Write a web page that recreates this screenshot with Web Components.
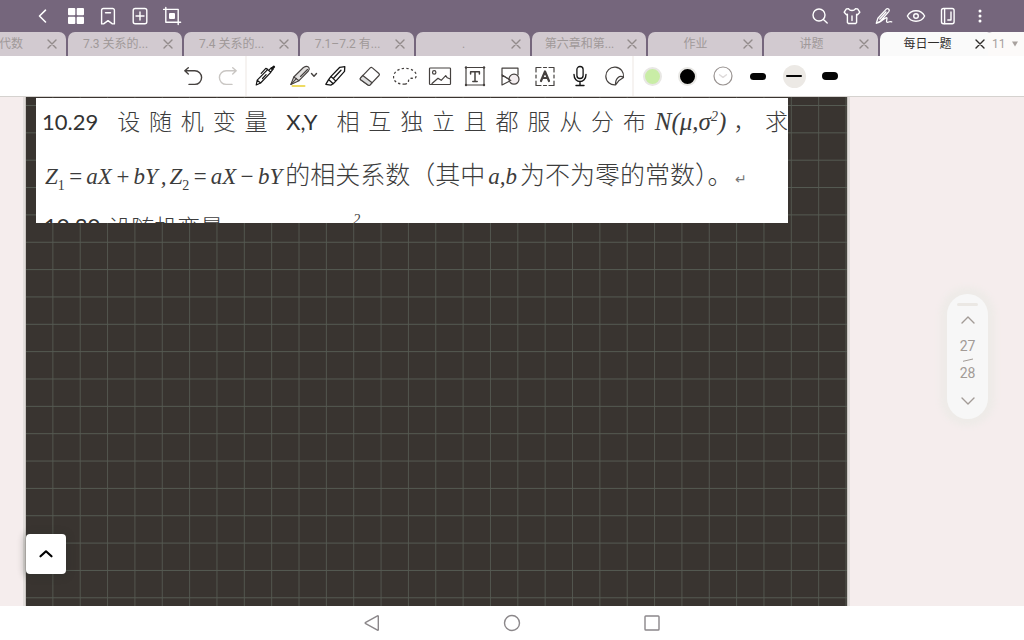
<!DOCTYPE html>
<html lang="zh-CN">
<head>
<meta charset="utf-8">
<meta name="viewport" content="width=device-width, initial-scale=1">
<title>每日一题</title>
<style>
html, body { margin: 0; height: 100%; }
body { font-family: Roboto, "Noto Sans CJK SC", sans-serif; }
</style>
</head>
<body>
<note-app></note-app>
<script>
const ICONS = {
  back: '<path d="M13.5 6.2 7.5 12l6 6" stroke-width="1.6"/>',
  grid: '<g fill="currentColor" stroke="none"><rect x="4" y="4" width="7.3" height="7.3" rx="1"/><rect x="12.7" y="4" width="7.3" height="7.3" rx="1"/><rect x="4" y="12.7" width="7.3" height="7.3" rx="1"/><rect x="12.7" y="12.7" width="7.3" height="7.3" rx="1"/></g>',
  bookmark: '<path d="M5.6 6.3a1.8 1.8 0 0 1 1.8-1.8h9.2a1.8 1.8 0 0 1 1.8 1.8v13.6h-2L12 16.6l-4.4 3.3h-2zM9.5 8.7h5"/>',
  add: '<rect x="5.2" y="4.5" width="13.6" height="15.2" rx="2"/><path d="M12 8v8M8 12h8"/>',
  crop: '<path d="M3.6 5.4h14.6v15.2M5.8 3.4v14.8h14.8"/><rect x="9" y="9" width="6" height="6" rx="1" fill="currentColor" stroke="none"/>',
  search: '<circle cx="11" cy="11" r="6"/><path d="m15.4 15.4 3.8 3.6"/>',
  shirt: '<path d="M8.6 4.6c.8 2.6 6 2.6 6.8 0l2.2.3 2.2 3.3-2.3 2.6-.9-.5v8.2l-1 1H8.4l-1-1v-8.2l-.9.5-2.3-2.6 2.2-3.3zM12 12v4.5"/>',
  sign: '<path d="m4.3 19.3 1.6-5 8.4-9.200q1.300-1 2.500.1 1 1.200 0 2.400L8.500 17zM7.800 15l6.200-7M4.300 19.300c4.200 0 7.200-5 10.200-5.600 1.600 0-1.300 4.300.9 4.600 1.500.2 1.500-1.500 4.300-.4" stroke-width="1.300"/>',
  eye: '<path d="M3.400 12c3.600-7 13.600-7 17.200 0-3.600 7-13.600 7-17.200 0z"/><circle cx="12" cy="12" r="2.300"/>',
  notebook: '<rect x="5.500" y="4.500" width="12.600" height="15.300" rx="2"/><path d="M8.600 5v14.500M15 8v8h-3.200"/>',
  more: '<g fill="currentColor" stroke="none"><circle cx="12" cy="7" r="1.500"/><circle cx="12" cy="12" r="1.500"/><circle cx="12" cy="17" r="1.500"/></g>',
  undo: '<path d="M7.300 3.700 3.800 6.800l3.500 3.300M4 6.800h9.800a6.800 6.800 0 0 1 0 13.600H8"/>',
  redo: '<path d="m16.700 3.700 3.500 3.100-3.500 3.300M20 6.800h-9.800a6.800 6.800 0 0 0 0 13.600H16"/>',
  pencil: '<path d="m3.200 21 1-4.800L14.600 5.600l3.200 2.700L7.600 19zM4.200 16.200 7.600 19M8.200 9.400l4.600-5 2 1M15.800 6.400l2.600-2.800 1.800 1.600-2.500 2.800M9.500 14.500l3.600-3.800" stroke-width="1.200"/><path d="m19 4.600 1.800-1.700" stroke-width="2.600"/>',
  pen: '<path d="M4.500 22h12" stroke="#eedb62" stroke-width="2"/><g stroke-width="1.100"><path d="m2.800 20.500 3-7.500 9.600-9.500q4-2.400 5.600.3.800 1.500-.6 3.200l-9.400 9.700z" fill="#e2e0df"/><path d="m3 20.300 5.500-6M5.800 13l5.200 3.700M12.500 12.500l7-7"/></g>',
  highlighter: '<path d="m8 12.400 8.800-9.100 5-.6-.3 4.700-8.700 9.700zM8 12.400l-2.400 3.200 4.600 4.100 2.600-2.600M5.600 15.600l-2.800 4.700 5 .8 2.400-1.400M10.500 14.200l7.500-8" stroke-width="1.300"/>',
  eraser: '<path d="m2.600 13.800 9.600-9.900q1.100-1 2.200 0l6.500 5.600q1 1 .1 2l-8.900 9.300q-1 1-2.100.1l-7.300-5.200q-1-.9-.1-1.900z" stroke-width="1.200"/><path d="m2.600 13.800 2.200-2.300 9.300 7.200-2 2.100q-1 1-2.100.1l-7.300-5.200q-1-.9-.1-1.900z" fill="#ddd" stroke-width="1.200"/>',
  lasso: '<path d="M12 20.200C4 20.500-.5 16.500.7 11.500 2 5.500 10 3.300 16 4.800c6.500 1.600 8.600 5.800 6.300 9.200-2.200.8-5.800-.6-6.600 1.500-.4 2 .3 3.800-3.700 4.700z" stroke-width="1.300" stroke-dasharray="2.300 2.300" stroke-linecap="butt"/>',
  image: '<rect x="1.500" y="4" width="21" height="16.500" rx=".8" stroke-width="1.200"/><circle cx="6.200" cy="8.400" r="1.700" stroke-width="1.200"/><path d="m4 19.500 6-5.200 3.200 2 4.500-4.600 1.600 2.100 3 1.200" stroke-width="1.200"/>',
  text: '<rect x="3" y="3.500" width="18" height="17.500" stroke-width="1.200"/><path d="M7.600 10V7.700h8.800V10M12 7.700v9.600m-2.200.2h4.400" stroke-width="1.500"/><g fill="currentColor" stroke="none"><circle cx="3" cy="3.500" r="1.200"/><circle cx="21" cy="3.500" r="1.200"/><circle cx="3" cy="21" r="1.200"/><circle cx="21" cy="21" r="1.200"/></g>',
  shapes: '<g stroke-width="1.200"><path d="M4 11V4.200h16v6.600M4 11v10l8.800-4.600z"/><circle cx="16" cy="15.200" r="5" fill="#f3edef"/><path d="m4 11 8.800 5.400"/></g>',
  ocr: '<path d="M3 8V3.500h5M16 3.500h5V8M21 17v4.500h-5M8 21.500H3V17M10.500 3.500h3M10.500 21.500h3M3 11v3M21 11v3" stroke-width="1.200"/><path d="m8 17 4-9.600L16 17M9.500 14h5" stroke-width="2.200"/>',
  mic: '<rect x="8.900" y="2.500" width="6.200" height="12" rx="3.100" stroke-width="1.300"/><path d="M6 10.500c0 9.300 12 9.300 12 0M12 17.500v4M8 21.500h8" stroke-width="1.400"/>',
  sticker: '<path d="M12.600 20.900a8.900 8.900 0 1 1 7.900-7.500q-3-2-5.600.3-2.700 2.500-2.300 7.200zM12.600 20.900l3.100-4.100 4.800-3.400" stroke-width="1.200"/>',
  check: '<circle cx="12" cy="12" r="9" stroke="#999391" stroke-width="1.200"/><path d="m8.500 10.800 3.500 2.600 3.500-2.600" stroke="#dedada"/>',
  close: '<path d="m8 8 8 8m0-8-8 8" stroke-width="1.400"/>',
  up: '<path d="m6 15 6-6 6 6"/>',
  down: '<path d="m6 9 6 6 6-6"/>',
  upBold: '<path d="m6.500 14.300 5.500-5 5.500 5" stroke-width="2.200"/>',
  small: '<path d="m9.500 10.500 2.500 2.700 2.500-2.700"/>',
  navBack: '<path d="M18.300 5.300v13.400q0 .9-.8.500L5.700 12.700q-1-.7 0-1.400l11.800-6.500q.8-.4.8.5z"/>',
  navHome: '<circle cx="12" cy="12" r="7.500"/>',
  navRecent: '<rect x="5" y="5" width="14" height="14" rx=".8"/>'
};

class Base extends HTMLElement {
  connectedCallback() {
    if (this.shadowRoot) return;
    const t = document.createElement('template');
    t.innerHTML = '<style>' + this.css() + '</style>' + this.html();
    this.attachShadow({ mode: 'open' }).append(t.content.cloneNode(true));
  }
}

customElements.define('ui-icon', class extends Base {
  css() { return ':host{display:block;width:24px;height:24px} svg{display:block;width:100%;height:100%}'; }
  html() {
    return '<svg viewBox="0 0 24 24" fill="none" stroke="currentColor" stroke-width="1.4" stroke-linecap="round" stroke-linejoin="round" aria-hidden="true">' + ICONS[this.getAttribute('name')] + '</svg>';
  }
});

customElements.define('icon-button', class extends Base {
  css() {
    return `:host{display:block;width:var(--button-width,32px);height:32px}
    button{all:unset;box-sizing:border-box;width:100%;height:100%;display:flex;align-items:center;justify-content:center;cursor:pointer;color:inherit}`;
  }
  html() {
    return '<button type="button" aria-label="' + this.getAttribute('label') + '"><ui-icon name="' + this.getAttribute('name') + '"></ui-icon></button>';
  }
});

customElements.define('pen-button', class extends Base {
  css() {
    return `:host{display:block;width:35px;height:32px}
    button{all:unset;width:100%;height:100%;display:flex;align-items:center;justify-content:center;position:relative}
    .more{position:absolute;left:20px;top:3px}`;
  }
  html() { return '<button type="button" aria-label="钢笔"><ui-icon name="pen"></ui-icon><ui-icon class="more" name="small"></ui-icon></button>'; }
});

customElements.define('app-header', class extends Base {
  css() {
    return `:host{display:flex;justify-content:space-between;height:32px;padding:0 28px;background:#75667c;color:#fff}
    div{display:flex}`;
  }
  html() {
    const make = list => list.map(([n, l]) => `<icon-button name="${n}" label="${l}"></icon-button>`).join('');
    return '<div>' + make([['back', '返回'], ['grid', '目录'], ['bookmark', '书签'], ['add', '添加页面'], ['crop', '裁剪']]) + '</div><div>' +
      make([['search', '搜索'], ['shirt', '主题'], ['sign', '手写'], ['eye', '阅读'], ['notebook', '笔记本'], ['more', '更多']]) + '</div>';
  }
});

customElements.define('note-tab', class extends Base {
  css() {
    return `:host{display:flex;flex:none;box-sizing:border-box;width:114px;height:24px;padding-right:7px;align-items:center;border-radius:7px 7px 0 0;background:#d2cad0;color:#a09999}
    :host([active]){background:#fafafa;color:#2f2c2a}
    button{all:unset;cursor:pointer}
    .title{flex:1;padding-left:2px;font-size:12px;line-height:24px;text-align:center;white-space:nowrap}
    :host([cut]) .title{text-align:right;padding-right:22px}
    .close{width:14px;height:24px;display:flex;align-items:center;justify-content:center;color:#928b8b}
    :host([active]) .close{color:#2f2c2a}
    ui-icon{flex:none}`;
  }
  html() { return '<button class="title" type="button"><slot></slot></button><button class="close" type="button" aria-label="关闭"><ui-icon name="close"></ui-icon></button>'; }
});

customElements.define('tab-strip', class extends Base {
  css() {
    return `:host{display:block;position:relative;background:#75667c;height:24px;overflow:hidden}
    nav{display:flex;gap:2px;justify-content:flex-end;padding-right:30px}
    .count{all:unset;position:absolute;right:0;top:0;box-sizing:border-box;width:36px;height:24px;padding-left:4px;display:flex;align-items:center;gap:5px;background:#fcfaf9;border-radius:4px 0 0 0;color:#a8a19e;font-size:12px}
    .count svg{width:8px;height:6px}`;
  }
  html() {
    return `<nav><note-tab cut>代数</note-tab><note-tab>7.3 关系的...</note-tab><note-tab>7.4 关系的...</note-tab><note-tab>7.1–7.2 有...</note-tab><note-tab>.</note-tab><note-tab>第六章和第...</note-tab><note-tab>作业</note-tab><note-tab>讲题</note-tab><note-tab active>每日一题</note-tab></nav>
    <button class="count" type="button">11<svg viewBox="0 0 8 6" aria-hidden="true"><path d="M1 .5h6L4 5.500z" fill="#a8a19e"/></svg></button>`;
  }
});

customElements.define('tool-swatch', class extends Base {
  css() {
    return `:host{display:block;width:35px;height:32px}
    button{all:unset;width:100%;height:100%;display:flex;align-items:center;justify-content:center}
    i{display:block;width:15px;height:15px;border-radius:50%;border:2px solid #e8e7e4;background:var(--ink)}`;
  }
  html() { return '<button type="button" aria-label="颜色"><i></i></button>'; }
});

customElements.define('stroke-size', class extends Base {
  css() {
    return `:host{display:block;width:36px;height:32px}
    button{all:unset;width:100%;height:100%;display:flex;align-items:center;justify-content:center}
    span{width:23px;height:23px;display:flex;align-items:center;justify-content:center;border-radius:50%}
    :host([selected]) span{background:#ece9e5}
    i{flex:none;width:16px;height:var(--weight);border-radius:4px;background:#050505}`;
  }
  html() { return '<button type="button" aria-label="粗细"><span><i></i></span></button>'; }
});

customElements.define('tool-bar', class extends Base {
  css() {
    return `:host{display:flex;justify-content:center;align-items:center;height:40px;padding-right:1px;background:#fff;border-bottom:1px solid #d5d2cf;color:#45413f;--button-width:35px}
    div{display:flex}
    hr{width:2px;height:40px;margin:0;border:0;background:#f6f3f1}
    hr + div + hr{margin-right:1px}
    .off{color:#c9c6c3}
    .dark{color:#151515}
    .green{--ink:#c9eda6}
    .black{--ink:#000}
    .thin{--weight:2px}
    .medium{--weight:7px}
    .thick{--weight:8px}`;
  }
  html() {
    const b = (n, l, c = '') => `<icon-button class="${c}" name="${n}" label="${l}"></icon-button>`;
    return `<div>${b('undo', '撤销')}${b('redo', '重做', 'off')}</div><hr>
    <div>${b('pencil', '铅笔', 'dark')}<pen-button></pen-button>${b('highlighter', '荧光笔', 'dark')}${b('eraser', '橡皮')}${b('lasso', '套索')}${b('image', '图片')}${b('text', '文本')}${b('shapes', '形状')}${b('ocr', '识别')}${b('mic', '录音', 'dark')}${b('sticker', '贴纸')}</div><hr>
    <div><tool-swatch class="green"></tool-swatch><tool-swatch class="black"></tool-swatch>${b('check', '选择颜色')}<stroke-size class="medium"></stroke-size><stroke-size class="thin" selected></stroke-size><stroke-size class="thick"></stroke-size></div>`;
  }
});

customElements.define('problem-card', class extends Base {
  css() {
    return `:host{display:block;box-sizing:border-box;height:125px;overflow:hidden;background:#fff;color:#3c3c3c;font:23px "Noto Sans CJK SC",sans-serif;font-weight:300}
    p{margin:0;white-space:nowrap}
    .first{height:44px;line-height:44px;padding-left:6px;text-align:justify;text-align-last:justify}
    .latin{font-family:Lato,"Noto Sans CJK SC",sans-serif;font-size:22px;font-weight:400;color:#333}
    .number{margin-right:12px}
    .pair{margin:0 12px 0 10px}
    .math{font:italic 23px "Liberation Serif",serif}
    .first .math{font-size:25px}
    sup,sub{font-size:14px;line-height:0;font-style:italic}
    sub{font-style:normal}
    .second{display:flex;align-items:baseline;gap:3px;padding-left:9px;height:62px;line-height:62px}
    .second .text{font-size:25px}
    .return{font-size:14px;color:#777}
    .third{display:flex;gap:8px;padding-left:8px;line-height:44px}
    .third .power{margin-left:122px;font:italic 14px/32px "Liberation Serif",serif}`;
  }
  html() {
    const m = s => `<span class="math">${s}</span>`;
    return `<p class="first"><span class="latin number">10.29</span> 设 随 机 变 量 <span class="latin pair">X,Y</span> 相 互 独 立 且 都 服 从 分 布 ${m('N(μ,σ<sup>2</sup>)')} ， 求</p>
    <p class="second">${m('Z<sub>1</sub>')}${m('=')}${m('aX')}${m('+')}${m('bY')}${m(',')}${m('Z<sub>2</sub>')}${m('=')}${m('aX')}${m('−')}${m('bY')}<span class="text">的相关系数（其中</span>${m('a,b')}<span class="text">为不为零的常数）。</span><span class="return">↵</span></p>
    <p class="third"><span class="latin">10.30</span><span>设随机变量</span><span class="power">2</span></p>`;
  }
});

customElements.define('grid-paper', class extends Base {
  css() {
    return `:host{display:grid;position:relative;overflow:hidden;background:#393430;box-shadow:0 0 0 1px #c9c4c1,0 0 0 3px #e3dedc}
    svg{width:100%;height:100%;position:absolute;inset:0}
    .content{position:relative;padding:1px 59px 0 10px}`;
  }
  html() {
    return `<svg aria-hidden="true"><defs><pattern id="cell" x="0" y="8" width="27.35" height="27.35" patternUnits="userSpaceOnUse"><path d="M0 .5h27.35M27 0v27.35" stroke="#555a52" fill="none"/></pattern></defs><rect width="100%" height="100%" fill="url(#cell)"/></svg><div class="content"><slot></slot></div>`;
  }
});

customElements.define('page-pager', class extends Base {
  css() {
    return `:host{display:flex;flex-direction:column;align-items:center;box-sizing:border-box;width:41px;height:125px;padding-top:9px;border-radius:21px;background:#f7f7f7;box-shadow:0 0 6px 7px #eeebe8;color:#a29b96;font-size:14px;line-height:16px;--button-width:41px}
    .grip{width:21px;height:3px;border-radius:2px;background:#ebe8e4}
    icon-button{height:28px}
    .now{margin-top:4px}
    .total{margin-bottom:6px}
    svg{display:block;width:12px;height:4px;margin:4px 0 3px}`;
  }
  html() {
    return `<i class="grip"></i><icon-button name="up" label="上一页"></icon-button><span class="now">27</span><svg viewBox="0 0 12 4" aria-hidden="true"><path d="M1 3.300 11 1" stroke="#a29b96"/></svg><span class="total">28</span><icon-button name="down" label="下一页"></icon-button>`;
  }
});

customElements.define('expand-button', class extends Base {
  css() {
    return `:host{display:block;width:40px;height:40px}
    button{all:unset;width:100%;height:100%;display:flex;align-items:center;justify-content:center;border-radius:4px;background:#fff;color:#000;box-shadow:0 1px 7px 2px #2a302b55}`;
  }
  html() { return '<button type="button" aria-label="展开"><ui-icon name="upBold"></ui-icon></button>'; }
});

customElements.define('note-workspace', class extends Base {
  css() {
    return `:host{display:grid;grid-template-columns:26px minmax(0,1fr) 177px;position:relative;overflow:hidden;background:#f5eded}
    grid-paper{grid-column:2}
    expand-button{position:absolute;left:26px;bottom:32px}
    page-pager{position:absolute;right:36px;top:197px}`;
  }
  html() { return '<grid-paper><problem-card></problem-card></grid-paper><expand-button></expand-button><page-pager></page-pager>'; }
});

customElements.define('system-nav', class extends Base {
  css() { return ':host{display:flex;justify-content:center;height:34px;align-items:center;background:#fff;color:#8b878a;--button-width:140px}'; }
  html() { return '<icon-button name="navBack" label="返回"></icon-button><icon-button name="navHome" label="主页"></icon-button><icon-button name="navRecent" label="最近任务"></icon-button>'; }
});

customElements.define('note-app', class extends Base {
  css() {
    return `:host{display:flex;flex-direction:column;min-height:100vh}
    note-workspace{flex:1}
    app-header,tab-strip,tool-bar,system-nav{flex:none}`;
  }
  html() { return '<app-header></app-header><tab-strip></tab-strip><tool-bar></tool-bar><note-workspace></note-workspace><system-nav></system-nav>'; }
});
</script>
</body>
</html>
